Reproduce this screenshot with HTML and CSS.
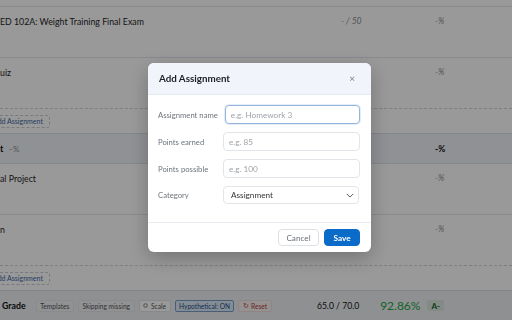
FILE: index.html
```html
<!DOCTYPE html>
<html>
<head>
<meta charset="utf-8">
<link rel="stylesheet" href="styles.css">
</head>
<body>
<div class="page">
  <div class="row-tail"></div>
  <div class="row">
    <span class="title">ED 102A: Weight Training Final Exam</span>
    <span class="score">- / 50</span>
    <span class="pct">-%</span>
  </div>
  <div class="row row-last">
    <span class="title">uiz</span>
    <span class="score"></span>
    <span class="pct">-%</span>
  </div>
  <div class="add-row"><button class="add-btn">Add Assignment</button></div>
  <div class="cat-head">
    <span class="cat-name"><b>t</b><span class="cat-weight">–%</span></span>
    <span></span>
    <span class="cat-pct">-%</span>
  </div>
  <div class="row">
    <span class="title">al Project</span>
    <span class="score"></span>
    <span class="pct">-%</span>
  </div>
  <div class="row row-last">
    <span class="title">n</span>
    <span class="score"></span>
    <span class="pct">-%</span>
  </div>
  <div class="add-row"><button class="add-btn">Add Assignment</button></div>
  <div class="grade-bar">
    <span class="grade-label">Grade</span>
    <div class="chips">
      <span class="chip">Templates</span>
      <span class="chip">Skipping missing</span>
      <span class="chip chip-white"><svg class="chip-ico" viewBox="0 0 10 10" width="5" height="5"><circle cx="5" cy="5" r="3.6" fill="none" stroke="#555" stroke-width="1.4"/></svg>Scale</span>
      <span class="chip chip-blue">Hypothetical: ON</span>
      <span class="chip chip-red"><span class="reset-ico">↻</span>Reset</span>
    </div>
    <div class="totals">
      <span class="total">65.0 / 70.0</span>
      <span class="final-pct">92.86%</span>
      <span class="letter">A-</span>
    </div>
  </div>
</div>

<div class="backdrop">
  <div class="modal">
    <div class="modal-head">
      <span class="modal-title">Add Assignment</span>
      <span class="close">×</span>
    </div>
    <div class="modal-body">
      <label class="field">
        <span class="label">Assignment name</span>
        <input class="input input-focus" type="text" placeholder="e.g. Homework 3">
      </label>
      <label class="field">
        <span class="label">Points earned</span>
        <input class="input" type="text" placeholder="e.g. 85">
      </label>
      <label class="field">
        <span class="label">Points possible</span>
        <input class="input" type="text" placeholder="e.g. 100">
      </label>
      <div class="field">
        <span class="label">Category</span>
        <div class="select">
          <span>Assignment</span>
          <svg viewBox="0 0 10 6" width="8" height="5"><path d="M1 1l4 4 4-4" fill="none" stroke="#555" stroke-width="1.2"/></svg>
        </div>
      </div>
    </div>
    <div class="modal-foot">
      <button class="btn btn-cancel">Cancel</button>
      <button class="btn btn-save">Save</button>
    </div>
  </div>
</div>
</body>
</html>
```

FILE: styles.css
```css
* { box-sizing: border-box; }
html, body {
  margin: 0;
  width: 512px;
  height: 320px;
  overflow: hidden;
  background: #fff;
  font-family: Lato, "Open Sans", sans-serif;
  color: #222;
}
.page {
  display: flex;
  flex-direction: column;
  width: 512px;
}
.row-tail {
  flex: none;
  height: 7px;
  border-bottom: 1px solid #e4e6ea;
}
.row {
  flex: none;
  display: grid;
  grid-template-columns: 341px 94px 1fr;
  height: 51px;
  padding-top: 9px;
  border-bottom: 1px solid #e4e6ea;
  font-size: 8.8px;
  line-height: 11px;
}
.row-last { border-bottom: none; height: 50px; }
.title { color: #262626; }
.score, .pct {
  color: #8a8f96;
  font-style: italic;
  font-size: 8.6px;
}
.add-row {
  flex: none;
  height: 25px;
  border-top: 1px dashed #cfd4da;
  display: flex;
  align-items: center;
  padding-top: 1px;
}
.add-btn {
  margin-left: -13px;
  height: 13px;
  padding: 0 6px 0 5px;
  border: 1px dashed #c6ccd4;
  border-radius: 3px;
  background: #fff;
  font-family: inherit;
  font-size: 7px;
  color: #3c6aa6;
  line-height: 11px;
}
.cat-head {
  flex: none;
  display: grid;
  grid-template-columns: 341px 94px 1fr;
  align-items: center;
  height: 31px;
  background: #eef2f7;
  border-top: 1px solid #d9dee5;
  border-bottom: 1px solid #dde2e8;
  font-size: 9px;
}
.cat-name b { font-weight: 700; color: #111; }
.cat-weight {
  margin-left: 5px;
  color: #8a8f96;
  font-size: 8px;
}
.cat-pct { font-weight: 700; color: #111; font-size: 8.6px; }
.grade-bar {
  flex: none;
  display: flex;
  align-items: center;
  height: 30px;
  background: #edf0f4;
  border-top: 1px solid #d8dde3;
  padding-left: 2px;
}
.grade-label {
  font-weight: 700;
  font-size: 8.8px;
  color: #111;
  margin-right: 10px;
}
.chips {
  display: flex;
  gap: 4px;
  align-items: center;
}
.chip {
  display: flex;
  align-items: center;
  height: 12px;
  padding: 0 3.5px;
  font-size: 6.6px;
  color: #555;
  background: #f2f3f5;
  border: 1px solid #e6e8eb;
  border-radius: 2px;
}
.chip-white { background: #fff; border-color: #e1e4e8; }
.chip-ico { margin-right: 3px; }
.chip-blue {
  background: #dde9f8;
  border-color: #7b9cc6;
  color: #274f86;
}
.chip-red {
  background: #fbf3f3;
  border-color: #f0dede;
  color: #b23a3a;
}
.reset-ico { margin-right: 2px; font-size: 7px; }
.totals {
  margin-left: auto;
  margin-right: 68px;
  display: flex;
  align-items: center;
}
.total {
  font-size: 8.6px;
  color: #111;
}
.final-pct {
  margin-left: 21px;
  font-size: 12px;
  color: #23a344;
}
.letter {
  margin-left: 7px;
  height: 11px;
  padding: 0 4px;
  display: flex;
  align-items: center;
  background: #dde8e0;
  border-radius: 2px;
  font-weight: 700;
  font-size: 8px;
  color: #14632c;
}

.backdrop {
  position: fixed;
  inset: 0;
  background: rgba(0, 0, 0, 0.4);
  display: flex;
  align-items: center;
  justify-content: center;
  padding-left: 7px;
  padding-bottom: 5px;
}
.modal {
  width: 223px;
  background: #fff;
  border-radius: 6px;
  overflow: hidden;
  box-shadow: 0 6px 20px rgba(0, 0, 0, 0.25);
}
.modal-head {
  height: 32px;
  display: flex;
  align-items: center;
  justify-content: space-between;
  padding: 0 16px 2px 11px;
  background: #f1f5fb;
  border-bottom: 1px solid #e6eaf0;
}
.modal-title {
  font-weight: 700;
  font-size: 9.8px;
  color: #1d2025;
}
.close {
  font-size: 10px;
  color: #7a7f86;
}
.modal-body {
  display: flex;
  flex-direction: column;
  gap: 8px;
  padding: 10px 11px 18px 10px;
}
.field {
  display: flex;
  align-items: center;
}
.label {
  min-width: 58px;
  margin-right: 7px;
  font-size: 7.7px;
  color: #6f757c;
  white-space: nowrap;
}
.input {
  flex: 1;
  min-width: 0;
  height: 19px;
  border: 1px solid #e1e4e8;
  border-radius: 4px;
  padding: 0 5px;
  font-family: inherit;
  font-size: 8.2px;
  color: #222;
  outline: none;
}
.input::placeholder { color: #9ea3a9; }
.input-focus {
  border-color: #94b6de;
  box-shadow: 0 0 0 1px rgba(148, 182, 222, 0.25);
}
.select {
  flex: 1;
  height: 18px;
  margin-right: 1px;
  border: 1px solid #e1e4e8;
  border-radius: 4px;
  display: flex;
  align-items: center;
  justify-content: space-between;
  padding: 0 4px 0 7px;
  font-size: 8.2px;
  color: #333;
}
.modal-foot {
  display: flex;
  justify-content: flex-end;
  gap: 5px;
  padding: 6px 11px;
  border-top: 1px solid #e8ebef;
}
.btn {
  height: 17px;
  border-radius: 4px;
  font-family: inherit;
  font-size: 8.2px;
  padding: 0;
}
.btn-cancel {
  width: 41px;
  background: #fff;
  border: 1px solid #dde1e6;
  color: #6b7178;
}
.btn-save {
  width: 36px;
  background: #0b6bc8;
  border: 1px solid #0b6bc8;
  color: #fff;
  font-weight: 700;
}
```
